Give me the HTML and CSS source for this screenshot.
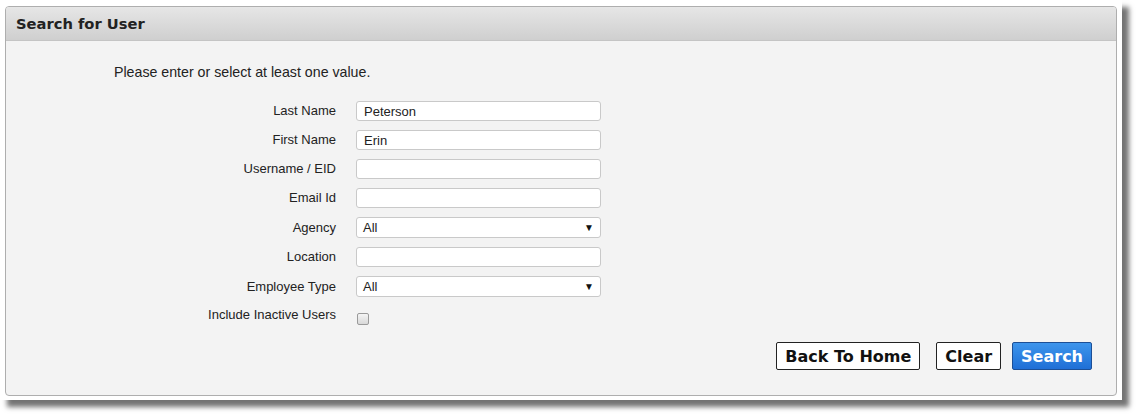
FILE: index.html
```html
<!DOCTYPE html>
<html lang="en">

<head>
  <meta charset="UTF-8">
  <title>Search for User</title>
  <link rel="stylesheet" href="styles.css">
</head>

<body>
  <div class="frame">
    <div class="panel">
      <div class="panel-header">Search for User</div>
      <div class="panel-body">
        <p class="intro">Please enter or select at least one value.</p>
        <form class="search-form">
          <label for="lastName">Last Name</label>
          <input id="lastName" type="text" value="Peterson">

          <label for="firstName">First Name</label>
          <input id="firstName" type="text" value="Erin">

          <label for="username">Username / EID</label>
          <input id="username" type="text">

          <label for="email">Email Id</label>
          <input id="email" type="text">

          <label for="agency">Agency</label>
          <div class="select">
            <span>All</span>
            <span class="arrow">&#9660;</span>
          </div>

          <label for="location">Location</label>
          <input id="location" type="text">

          <label for="empType">Employee Type</label>
          <div class="select">
            <span>All</span>
            <span class="arrow">&#9660;</span>
          </div>

          <label for="inactive" class="check-label">Include Inactive Users</label>
          <div class="check-cell"><span class="checkbox" id="inactive"></span></div>
        </form>

        <div class="actions">
          <button type="button" class="button">Back To Home</button>
          <button type="button" class="button clear">Clear</button>
          <button type="button" class="button primary">Search</button>
        </div>
      </div>
    </div>
  </div>
</body>

</html>
```

FILE: styles.css
```css
* {
  margin: 0;
  padding: 0;
  box-sizing: border-box;
}

html, body {
  background-color: #fff;
  font-family: Arial, "Liberation Sans", sans-serif;
  font-size: 13px;
  color: #222;
}

body {
  min-height: 419px;
}

.frame {
  width: 1122px;
  height: 400px;
  background-color: #fff;
  padding: 6px 5px 4px 5px;
  box-shadow: 7px 7px 5px rgba(0, 0, 0, 0.55);
}

.panel {
  height: 100%;
  border: 1px solid #aeaeae;
  border-radius: 4px;
  background-color: #f3f3f3;
  display: flex;
  flex-direction: column;
}

.panel-header {
  height: 34px;
  padding-left: 10px;
  line-height: 34px;
  font-family: "DejaVu Sans", Verdana, sans-serif;
  font-weight: bold;
  font-size: 14.7px;
  color: #222;
  background: linear-gradient(#e6e6e6, #cfcfcf);
  border-bottom: 1px solid #c4c4c4;
  border-radius: 3px 3px 0 0;
}

.panel-body {
  flex: 1;
  display: flex;
  flex-direction: column;
}

.intro {
  margin: 23px 0 0 108px;
  font-size: 14.2px;
  line-height: 17px;
}

.search-form {
  display: grid;
  grid-template-columns: 330px 245px;
  column-gap: 20px;
  row-gap: 9px;
  margin-top: 20px;
  align-items: center;
}

.search-form label {
  text-align: right;
  line-height: 20px;
}

.search-form input {
  height: 20px;
  border: 1px solid #c9c9c9;
  border-radius: 3px;
  background-color: #fff;
  padding: 0 7px;
  font-family: Arial, "Liberation Sans", sans-serif;
  font-size: 13px;
  color: #222;
}

.select {
  height: 21px;
  border: 1px solid #c9c9c9;
  border-radius: 3px;
  background-color: #fff;
  padding: 0 6px 0 6px;
  display: flex;
  align-items: center;
  justify-content: space-between;
  font-size: 13px;
}

.arrow {
  font-size: 10px;
  color: #111;
}

.check-label {
  align-self: start;
  margin-top: -1px;
}

.check-cell {
  height: 20px;
  display: flex;
  align-items: flex-end;
  padding-left: 1px;
}

.checkbox {
  width: 12px;
  height: 12px;
  border: 1px solid #9a9a9a;
  border-radius: 2px;
  background: linear-gradient(#f4f4f4, #d8d8d8);
  margin-bottom: 1px;
}

.actions {
  display: flex;
  justify-content: flex-end;
  gap: 16px;
  margin-top: auto;
  margin-bottom: 25px;
  padding-right: 24px;
}

.button {
  height: 28px;
  padding: 0 8px;
  border: 1px solid #222;
  border-radius: 2px;
  background-color: #fff;
  font-family: "DejaVu Sans", Verdana, sans-serif;
  font-weight: bold;
  font-size: 16px;
  color: #111;
  cursor: pointer;
}

.clear {
  margin-right: -5px;
}

.primary {
  color: #fff;
  background: linear-gradient(#3d95ec, #1f6fd6);
  border-color: #1c4f96;
}
```
